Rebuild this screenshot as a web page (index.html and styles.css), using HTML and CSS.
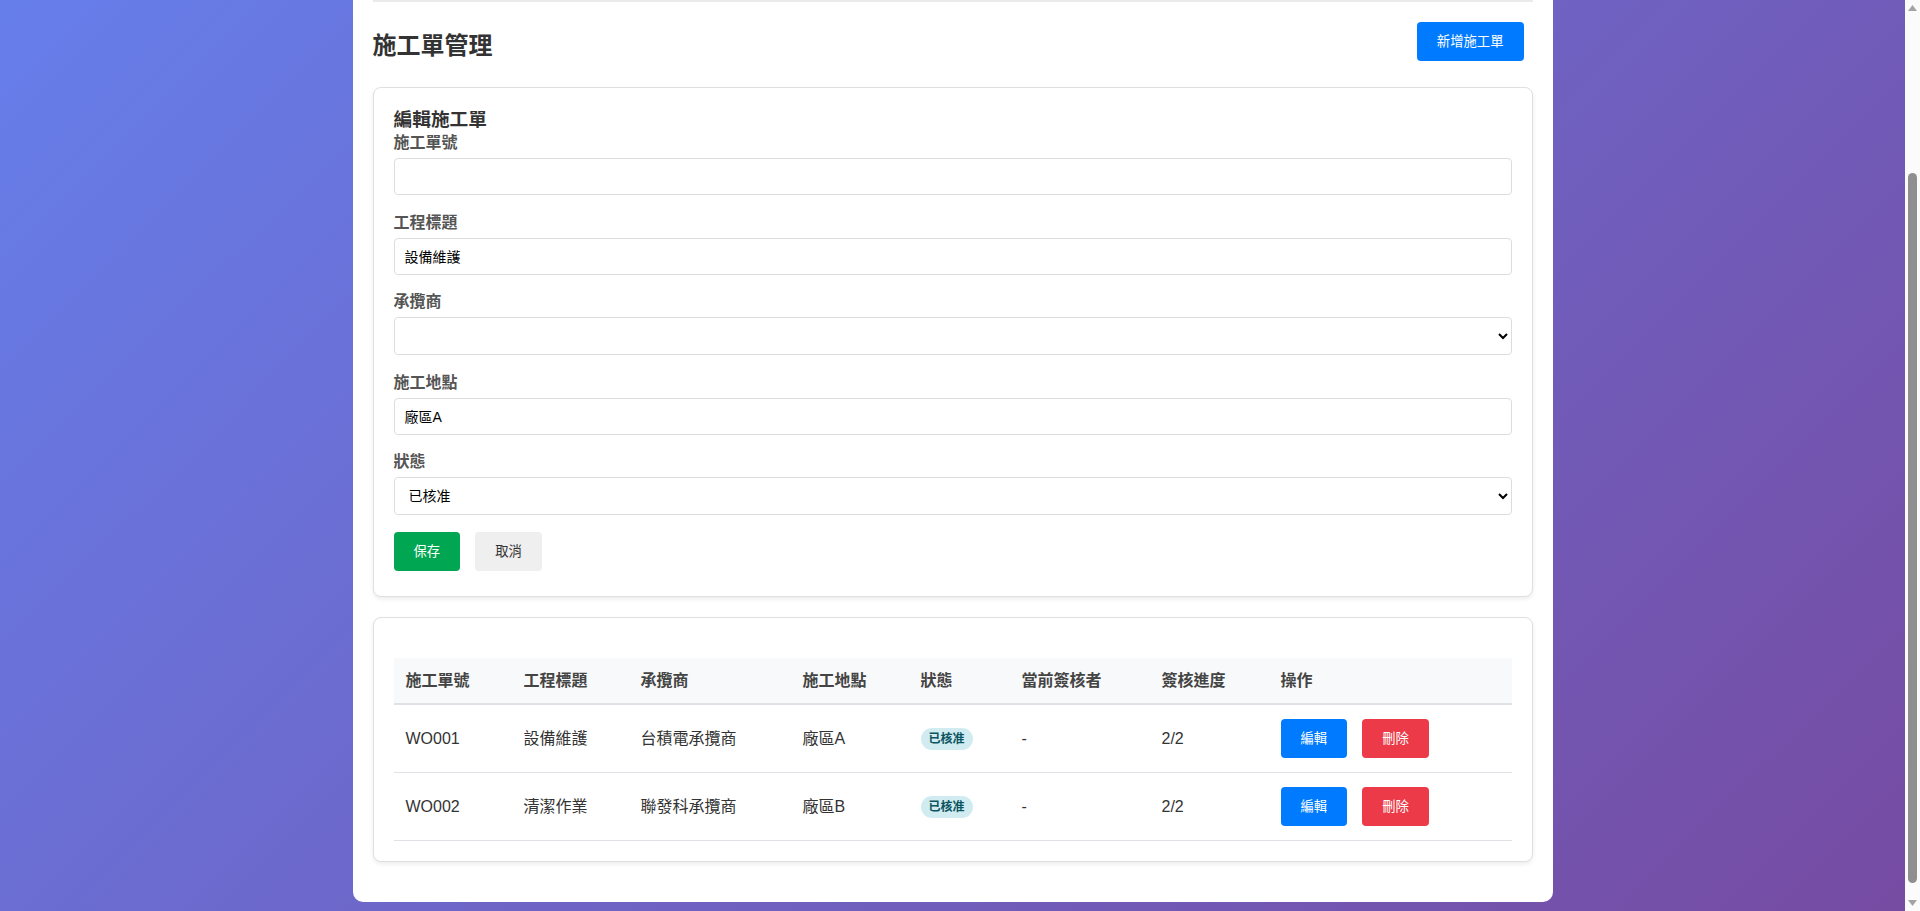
FILE: index.html
```html
<!DOCTYPE html>
<html lang="zh-Hant">
<head>
<meta charset="utf-8">
<title>施工單管理</title>
<link rel="stylesheet" href="styles.css">
</head>
<body>
<div class="container">
  <hr class="divider">

  <div class="page-header">
    <h2>施工單管理</h2>
    <button class="btn btn-primary btn-add">新增施工單</button>
  </div>

  <div class="card form-card">
    <h3>編輯施工單</h3>
    <div class="form-group">
      <label>施工單號</label>
      <input type="text" value="">
    </div>
    <div class="form-group">
      <label>工程標題</label>
      <input type="text" value="設備維護">
    </div>
    <div class="form-group">
      <label>承攬商</label>
      <select>
        <option value="" selected></option>
        <option>台積電承攬商</option>
        <option>聯發科承攬商</option>
      </select>
    </div>
    <div class="form-group">
      <label>施工地點</label>
      <input type="text" value="廠區A">
    </div>
    <div class="form-group">
      <label>狀態</label>
      <select>
        <option>待審核</option>
        <option selected>已核准</option>
        <option>已退回</option>
      </select>
    </div>
    <div class="form-actions">
      <button class="btn btn-success">保存</button>
      <button class="btn btn-secondary">取消</button>
    </div>
  </div>

  <div class="card table-card">
    <table>
      <thead>
        <tr>
          <th class="c-no">施工單號</th>
          <th class="c-title">工程標題</th>
          <th class="c-vendor">承攬商</th>
          <th class="c-site">施工地點</th>
          <th class="c-status">狀態</th>
          <th class="c-signer">當前簽核者</th>
          <th class="c-progress">簽核進度</th>
          <th class="c-actions">操作</th>
        </tr>
      </thead>
      <tbody>
        <tr>
          <td>WO001</td>
          <td>設備維護</td>
          <td>台積電承攬商</td>
          <td>廠區A</td>
          <td><span class="badge">已核准</span></td>
          <td>-</td>
          <td>2/2</td>
          <td><div class="row-actions"><button class="btn btn-primary">編輯</button><button class="btn btn-danger">刪除</button></div></td>
        </tr>
        <tr>
          <td>WO002</td>
          <td>清潔作業</td>
          <td>聯發科承攬商</td>
          <td>廠區B</td>
          <td><span class="badge">已核准</span></td>
          <td>-</td>
          <td>2/2</td>
          <td><div class="row-actions"><button class="btn btn-primary">編輯</button><button class="btn btn-danger">刪除</button></div></td>
        </tr>
      </tbody>
    </table>
  </div>
</div>

<aside class="scrollbar" aria-hidden="true">
  <svg class="sb-arrow" width="15" height="15" viewBox="0 0 15 15"><polygon points="3,11 12,11 7.5,5" fill="#a3a3a3"/></svg>
  <div class="sb-track"><div class="sb-thumb"></div></div>
  <svg class="sb-arrow" width="15" height="15" viewBox="0 0 15 15"><polygon points="3,4 12,4 7.5,10" fill="#a3a3a3"/></svg>
</aside>
</body>
</html>
```

FILE: styles.css
```css
* {
  box-sizing: border-box;
}

html,
body {
  height: 911px;
  overflow: hidden;
}

body {
  margin: 0;
  padding: 0 15px 9.5px 0;
  font-family: "Liberation Sans", "Noto Sans CJK TC", sans-serif;
  color: #333;
  background: linear-gradient(135deg, #667eea 0%, #764ba2 100%);
}

.container {
  max-width: 1200px;
  margin: 0 auto;
  padding: 0 20px 20px;
  background: #fff;
  border-radius: 0 0 10px 10px;
}

.divider {
  margin: 0;
  height: 0;
  border: none;
  border-top: 2px solid #eaeaea;
}

.page-header {
  display: flex;
  justify-content: space-between;
  align-items: flex-start;
  margin: 20px 0 22px;
}

.page-header h2 {
  margin: 0;
  padding-top: 4px;
  font-size: 24px;
  line-height: 39px;
  font-weight: bold;
  color: #333;
}

.btn {
  height: 39px;
  padding: 0 20px;
  border: none;
  border-radius: 4px;
  font-family: inherit;
  font-size: 13.33px;
  line-height: 39px;
  cursor: pointer;
}

.btn-add {
  margin-right: 9px;
}

.btn-primary {
  background: #007bff;
  color: #fff;
}

.btn-success {
  background: #00a651;
  color: #fff;
}

.btn-secondary {
  background: #efefef;
  color: #333;
}

.btn-danger {
  background: #ec3a48;
  color: #fff;
}

.card {
  background: #fff;
  border: 1px solid #e0e0e0;
  border-radius: 8px;
  padding: 20px;
  margin-bottom: 20px;
  box-shadow: 0 2px 4px rgba(0, 0, 0, 0.08);
}

.form-card h3 {
  margin: 0;
  font-size: 18.72px;
  line-height: 24px;
  font-weight: bold;
  color: #333;
}

.form-group {
  margin-bottom: 16.5px;
}

.form-group label {
  display: block;
  margin-bottom: 4px;
  font-size: 16px;
  line-height: 22px;
  font-weight: bold;
  color: #555;
}

.form-group input,
.form-group select {
  display: block;
  width: 100%;
  height: 37px;
  padding: 0 10px;
  border: 1px solid #ddd;
  border-radius: 4px;
  background: #fff;
  color: #000;
  font-family: inherit;
  font-size: 14px;
}

.form-group select {
  height: 38px;
}

.form-actions {
  display: flex;
  gap: 15px;
  padding-bottom: 5px;
}

.table-card table {
  width: 100%;
  margin-top: 20px;
  border-collapse: collapse;
  table-layout: fixed;
}

.table-card th {
  padding: 12px;
  background: #f8f9fa;
  border-bottom: 2px solid #dee2e6;
  text-align: left;
  font-size: 16px;
  line-height: 21px;
  font-weight: bold;
  color: #444;
}

.table-card td {
  padding: 14px 12px;
  border-bottom: 1px solid #dee2e6;
  font-size: 16px;
  line-height: 21px;
  color: #333;
  vertical-align: middle;
}

.c-no { width: 118px; }
.c-title { width: 117px; }
.c-vendor { width: 162px; }
.c-site { width: 118px; }
.c-status { width: 101px; }
.c-signer { width: 140px; }
.c-progress { width: 119px; }
.c-actions { width: auto; }

.badge {
  display: inline-block;
  padding: 3px 8px;
  border-radius: 12px;
  background: #d1ecf1;
  color: #0c5460;
  font-size: 12px;
  line-height: 16px;
  font-weight: bold;
}

.row-actions {
  display: flex;
  gap: 15px;
}

.scrollbar {
  position: fixed;
  top: 0;
  right: 0;
  width: 15px;
  height: 911px;
  display: flex;
  flex-direction: column;
  background: #fbfbfb;
}

.sb-arrow {
  display: block;
  flex: none;
}

.sb-track {
  flex: 1;
  display: flex;
  flex-direction: column;
  justify-content: flex-end;
  padding: 0 3px 13px;
}

.sb-thumb {
  height: 710px;
  border-radius: 5px;
  background: #8f8f8f;
}
```
